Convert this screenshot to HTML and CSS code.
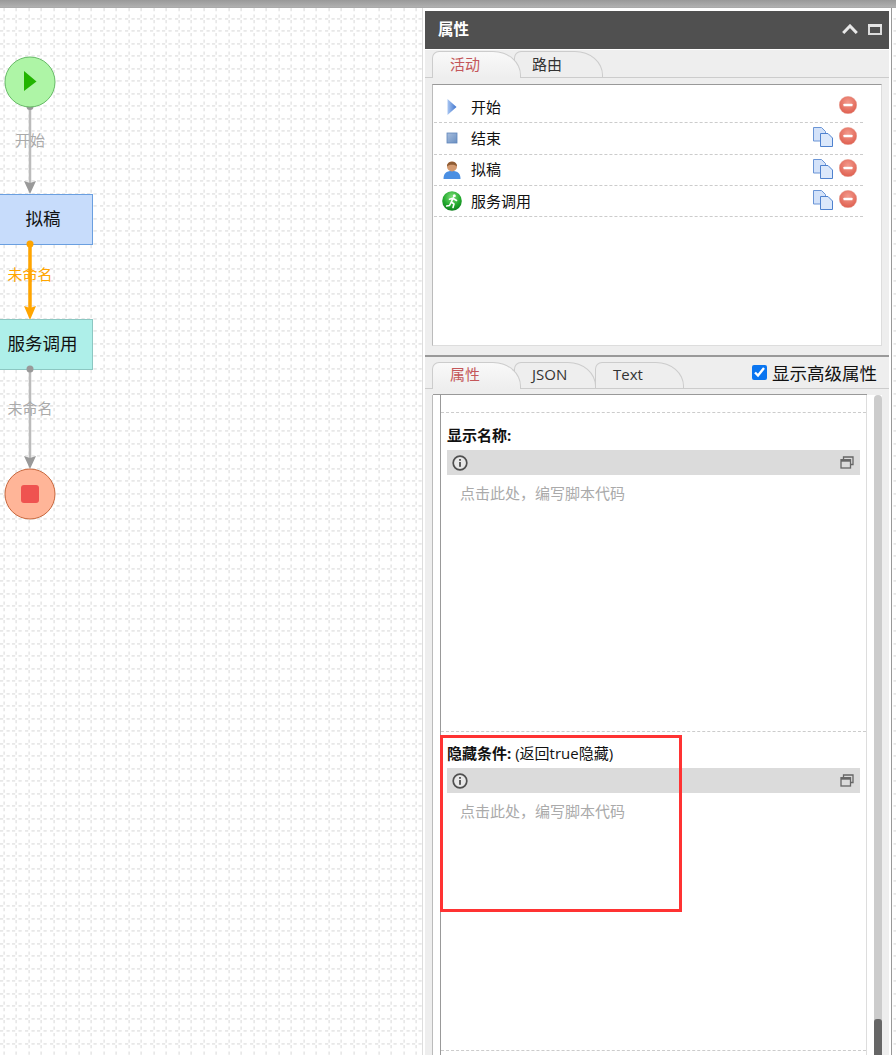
FILE: index.html
```html
<!DOCTYPE html>
<html lang="zh-CN">
<head>
<meta charset="utf-8">
<title>流程设计</title>
<link rel="stylesheet" href="styles.css">
</head>
<body>
<svg class="defs" width="0" height="0" aria-hidden="true">
  <defs>
    <linearGradient id="gPlay" x1="0" y1="0" x2="1" y2="0"><stop offset="0" stop-color="#a9c6f2"/><stop offset="1" stop-color="#3c72cc"/></linearGradient>
    <linearGradient id="gSquare" x1="0" y1="0" x2="1" y2="1"><stop offset="0" stop-color="#a8bedd"/><stop offset="1" stop-color="#6a90c2"/></linearGradient>
    <radialGradient id="gGreen" cx=".5" cy=".3" r=".75"><stop offset="0" stop-color="#7fe07a"/><stop offset=".6" stop-color="#21a82c"/><stop offset="1" stop-color="#0d7a1e"/></radialGradient>
    <radialGradient id="gRed" cx=".5" cy=".35" r=".7"><stop offset="0" stop-color="#f39a8c"/><stop offset="1" stop-color="#dd5a4a"/></radialGradient>
    <symbol id="iPlay" viewBox="0 0 18 18"><path d="M4.500 1 L13.500 9 L4.500 17 Z" fill="url(#gPlay)"/></symbol>
    <symbol id="iSquare" viewBox="0 0 18 18"><rect x="4" y="4" width="10" height="10" fill="url(#gSquare)" stroke="#5f86bb" stroke-width=".8"/></symbol>
    <symbol id="iUser" viewBox="0 0 18 18">
      <path d="M.5 18 C.5 12.500 3 10 9 10 C15 10 17.500 12.500 17.500 18 Z" fill="#4b8fe2"/>
      <circle cx="9" cy="5.500" r="5" fill="#d39a70"/>
      <path d="M4 5.500 C3.500 -1 14.500 -1 14 5.500 C12 3.300 6 3.300 4 5.500 Z" fill="#8f5c34"/>
    </symbol>
    <symbol id="iRun" viewBox="0 0 20 20">
      <circle cx="10" cy="10" r="9.800" fill="url(#gGreen)"/>
      <circle cx="12.300" cy="4.800" r="1.500" fill="#fff"/>
      <path d="M11.200 6.800 L9.300 11 L12 13 L11 16.500 M9.300 11 L7.500 14.500 L4.700 15 M10.800 7.300 L7.500 8.300 M11.300 7.500 L14.500 9.500" fill="none" stroke="#fff" stroke-width="1.600" stroke-linecap="round" stroke-linejoin="round"/>
    </symbol>
    <symbol id="iCopy" viewBox="0 0 20 20">
      <path d="M.5 .5 H8.500 L12.500 4.500 V14 H.5 Z" fill="#d3e2f9" stroke="#6a95d6"/>
      <path d="M7.500 6.500 H15 L19.500 11 V19.500 H7.500 Z" fill="#dbe8fb" stroke="#4f82cf"/>
    </symbol>
    <symbol id="iDel" viewBox="0 0 18 18">
      <circle cx="9" cy="9" r="8.800" fill="url(#gRed)" stroke="#e9b3a8" stroke-width=".4"/>
      <rect x="4.500" y="7.700" width="9" height="2.600" rx=".6" fill="#fff"/>
    </symbol>
    <symbol id="iInfo" viewBox="0 0 16 16">
      <circle cx="8" cy="8" r="6.800" fill="#e8e8e8" stroke="#4f4f4f" stroke-width="1.700"/>
      <rect x="7.100" y="7" width="1.800" height="4.800" fill="#4f4f4f"/>
      <rect x="7.100" y="4" width="1.800" height="1.800" fill="#4f4f4f"/>
    </symbol>
    <symbol id="iRestore" viewBox="0 0 14 14">
      <path d="M3.500 3.500 V1 H13 V8.500 H10.500" fill="none" stroke="#666" stroke-width="1.300"/>
      <rect x="1" y="3.700" width="9.500" height="8.300" fill="none" stroke="#666" stroke-width="1.300"/>
      <rect x="1" y="3.700" width="9.500" height="2" fill="#666"/>
    </symbol>
  </defs>
</svg>

<div class="topbar"></div>
<div class="main">
  <div class="canvas">
    <svg class="diagram" width="422" height="1048" viewBox="0 7 422 1048">
      <path class="edge" d="M30 106 V184"/>
      <path class="arrow" d="M24 181 L30 183 L36 181 L30 194 Z"/>
      <circle class="port" cx="30" cy="106.500" r="3.500"/>
      <path class="edge edge-active" d="M30 244 V310"/>
      <path class="arrow arrow-active" d="M24 306 L30 308 L36 306 L30 320 Z"/>
      <path class="edge" d="M30 369 V458"/>
      <path class="arrow" d="M24 456 L30 458 L36 456 L30 469 Z"/>

      <circle class="start" cx="30" cy="82" r="25"/>
      <path class="start-mark" d="M24 71 L36.500 81.500 L24 91 Z"/>

      <rect class="task" x="-10" y="194.500" width="102.500" height="50"/>
      <text class="node-text" x="43" y="225">拟稿</text>
      <circle class="port port-active" cx="30" cy="244" r="3.500"/>

      <rect class="service" x="-10" y="319.500" width="102.500" height="50"/>
      <text class="node-text" x="42.500" y="350">服务调用</text>
      <circle class="port" cx="30" cy="369" r="3.500"/>

      <circle class="end" cx="30" cy="494" r="25"/>
      <rect class="end-mark" x="21" y="485" width="18" height="18" rx="3"/>

      <text class="edge-text" x="30" y="146">开始</text>
      <text class="edge-text edge-text-active" x="30" y="280">未命名</text>
      <text class="edge-text" x="30" y="414">未命名</text>
    </svg>
  </div>

  <aside class="panel">
    <header class="panel-head">
      <span class="panel-title">属性</span>
      <span class="panel-tools">
        <svg width="16" height="10" viewBox="0 0 16 10"><path d="M1.200 9 L8 2 L14.800 9" fill="none" stroke="#e8e8e8" stroke-width="3"/></svg>
        <svg width="14" height="11" viewBox="0 0 14 11"><rect x="1" y="1.500" width="12" height="8.500" fill="none" stroke="#dcdcdc" stroke-width="2"/><rect x="0" y="0" width="14" height="3" fill="#e4e4e4"/></svg>
      </span>
    </header>

    <section class="section section-top">
      <div class="tabs">
        <span class="tab is-active">活动</span>
        <span class="tab">路由</span>
      </div>
      <div class="list-box">
        <ul class="list">
          <li class="row">
            <span class="row-icon"><svg width="18" height="18"><use href="#iPlay"/></svg></span>
            <span class="row-name">开始</span>
            <span class="row-actions"><svg class="del" width="18" height="18"><use href="#iDel"/></svg></span>
          </li>
          <li class="row">
            <span class="row-icon"><svg width="18" height="18"><use href="#iSquare"/></svg></span>
            <span class="row-name">结束</span>
            <span class="row-actions"><svg width="20" height="20"><use href="#iCopy"/></svg><svg class="del" width="18" height="18"><use href="#iDel"/></svg></span>
          </li>
          <li class="row">
            <span class="row-icon"><svg width="18" height="18"><use href="#iUser"/></svg></span>
            <span class="row-name">拟稿</span>
            <span class="row-actions"><svg width="20" height="20"><use href="#iCopy"/></svg><svg class="del" width="18" height="18"><use href="#iDel"/></svg></span>
          </li>
          <li class="row">
            <span class="row-icon"><svg width="20" height="20"><use href="#iRun"/></svg></span>
            <span class="row-name">服务调用</span>
            <span class="row-actions"><svg width="20" height="20"><use href="#iCopy"/></svg><svg class="del" width="18" height="18"><use href="#iDel"/></svg></span>
          </li>
        </ul>
      </div>
    </section>

    <section class="section section-bottom">
      <div class="tabs tabs-bottom">
        <span class="tab is-active">属性</span>
        <span class="tab tab-short">JSON</span>
        <span class="tab tab-text">Text</span>
        <label class="advanced"><input type="checkbox" checked>显示高级属性</label>
      </div>
      <div class="prop-box">
        <div class="prop-scroll">
          <div class="prop-spacer"></div>
          <div class="field field-first">
            <div class="field-label"><b>显示名称:</b></div>
            <div class="field-bar">
              <svg width="16" height="16"><use href="#iInfo"/></svg>
              <svg width="14" height="14"><use href="#iRestore"/></svg>
            </div>
            <div class="field-code">点击此处，编写脚本代码</div>
          </div>
          <div class="field">
            <div class="field-label"><b>隐藏条件:</b> (返回true隐藏)</div>
            <div class="field-bar">
              <svg width="16" height="16"><use href="#iInfo"/></svg>
              <svg width="14" height="14"><use href="#iRestore"/></svg>
            </div>
            <div class="field-code">点击此处，编写脚本代码</div>
            <div class="highlight"></div>
          </div>
        </div>
        <div class="scrollbar"><div class="scroll-thumb"></div></div>
      </div>
    </section>
  </aside>
</div>
</body>
</html>
```
FILE: styles.css
```css
* { box-sizing: border-box; }
html, body { margin: 0; height: 100%; overflow: hidden; }
body {
  display: flex;
  flex-direction: column;
  font-family: "Open Sans", "Noto Sans CJK SC", sans-serif;
  font-size: 15px;
  color: #111;
  background: #fff;
}
.defs { position: absolute; }

.topbar {
  flex: 0 0 8px;
  background: linear-gradient(#999, #b0b0b0);
  border-bottom: 1px solid #aaa;
}

.main {
  flex: 1;
  min-height: 0;
  display: flex;
  background-color: #fff;
  background-image: url("data:image/svg+xml,%3Csvg xmlns='http://www.w3.org/2000/svg' width='12.5' height='12.5'%3E%3Cpath d='M4 0V12.5M0 10.500H12.500' stroke='%23e8e8e8' stroke-width='1.600' stroke-dasharray='3.100 3.150' fill='none'/%3E%3C/svg%3E");
  background-size: 12.5px 12.5px;
}

.canvas { flex: 0 0 422px; overflow: hidden; }
.diagram { display: block; margin-top: -1px; }
.edge { fill: none; stroke: #bbb; stroke-width: 2.5; }
.edge-active { stroke: #ffa500; stroke-width: 3.5; }
.arrow { fill: #999; }
.arrow-active { fill: #ffa500; }
.port { fill: #999; }
.port-active { fill: #ffa500; }
.start { fill: #aef5a6; stroke: #66bb66; stroke-width: 1; }
.start-mark { fill: #22b400; }
.end { fill: #ffb598; stroke: #c8673c; stroke-width: 1; }
.end-mark { fill: #ef5350; }
.task { fill: #c7dcfb; stroke: #6a9fe0; stroke-width: 1; }
.service { fill: #aeefe9; stroke: #8cc7c2; stroke-width: 1; }
.node-text { font-size: 17.5px; text-anchor: middle; fill: #111; }
.edge-text { font-size: 15px; text-anchor: middle; fill: #aaa; }
.edge-text-active { fill: #ffa500; }

.panel {
  flex: 0 0 470px;
  display: flex;
  flex-direction: column;
  min-height: 0;
  padding: 3px 2px 0;
  background: #fff;
  border-left: 1px solid #ddd;
  border-right: 1px solid #999;
}
.panel-head {
  flex: 0 0 38px;
  display: flex;
  align-items: center;
  justify-content: space-between;
  padding: 0 7px 0 13px;
  background: #505050;
  color: #fff;
}
.panel-title { font-size: 15.5px; font-weight: 700; line-height: 20px; margin-top: -2px; }
.panel-tools { display: flex; align-items: center; gap: 10px; margin-top: -2px; }

.section { background: #eee; }
.section-top { flex: 0 0 305px; margin-top: 1px; }
.section-bottom {
  flex: 1;
  min-height: 0;
  display: flex;
  flex-direction: column;
  border-top: 2px solid #999;
}

.tabs {
  display: flex;
  align-items: flex-end;
  height: 28px;
  padding-left: 7px;
  border-bottom: 1px solid #ccc;
}
.tabs-bottom { height: 32px; }
.tabs-bottom .tab { line-height: 22px; }
.tab {
  position: relative;
  width: 89px;
  height: 26px;
  margin-right: -7px;
  padding-left: 17px;
  line-height: 24px;
  font-size: 15px;
  background: #eee;
  color: #333;
  border: 1px solid #ccc;
  border-bottom: 0;
  border-radius: 7px 28px 0 0 / 7px 24px 0 0;
}
.tab-short { width: 82px; margin-right: -1px; }
.tab-text { padding-left: 17px; }
.tab.is-active {
  z-index: 1;
  color: #c4575a;
  background: linear-gradient(#f9f9f9, #eee);
  margin-bottom: -1px;
  height: 27px;
}
.tab:last-of-type { margin-right: 0; }
.advanced {
  margin-left: auto;
  margin-right: 12px;
  align-self: center;
  display: flex;
  align-items: center;
  gap: 5px;
  font-size: 17.5px;
  line-height: 24px;
  color: #111;
}
.advanced input { width: 15px; height: 15px; margin: 0; accent-color: #0a75f0; }

.list-box {
  height: 262px;
  margin: 6px 7px 0;
  padding: 7px 18px 0 1px;
  background: #fff;
  border-top: 1px solid #999;
  border-left: 1px solid #bbb;
  border-right: 1px solid #ddd;
  border-bottom: 1px solid #ddd;
}
.list { list-style: none; margin: 0; padding: 0; }
.row {
  display: flex;
  align-items: center;
  height: 31.3px;
  padding-bottom: 2px;
  border-bottom: 1px dashed #ccc;
}
.row-icon {
  flex: 0 0 37px;
  display: flex;
  justify-content: center;
  padding-right: 2px;
  margin-top: 2px;
}
.row-icon svg { display: block; }
.row-name { font-size: 15px; }
.row-actions {
  margin-left: auto;
  margin-right: 6px;
  display: flex;
  align-items: center;
  gap: 6px;
}
.row-actions svg { display: block; }
.row-actions .del { margin-bottom: 2px; }

.prop-box {
  flex: 1;
  min-height: 0;
  display: flex;
  margin: 6px 7px 0;
  padding-left: 7px;
  background: #fff;
  border-left: 1px solid #bbb;
  position: relative;
}
.prop-box::before {
  content: "";
  position: absolute;
  top: -1px;
  left: 0;
  width: 434px;
  height: 1px;
  background: #999;
}
.prop-scroll {
  flex: 0 0 427px;
  border-left: 1px solid #999;
  border-right: 1px solid #ddd;
}
.prop-spacer { height: 18px; border-bottom: 1px dashed #ccc; }
.field {
  position: relative;
  height: 319px;
  padding: 11px 6px 0;
  border-bottom: 1px dashed #ccc;
}
.field-first { padding-top: 12px; }
.field-label { height: 20px; line-height: 20px; font-size: 15px; color: #111; }
.field-label b { font-weight: 700; }
.field-bar {
  display: flex;
  align-items: center;
  justify-content: space-between;
  height: 25px;
  margin-top: 5px;
  padding: 0 6px 0 5px;
  background: #dbdbdb;
}
.field-bar svg { display: block; }
.field-code {
  margin-top: 8px;
  padding-left: 13px;
  line-height: 20px;
  font-size: 15px;
  color: #aaa;
}
.highlight {
  position: absolute;
  left: -1px;
  top: 3px;
  width: 242px;
  height: 177px;
  border: 3px solid #ff3333;
}
.scrollbar {
  flex: 0 0 8px;
  margin-left: 7px;
  display: flex;
  flex-direction: column;
  justify-content: flex-end;
  background: #ccc;
  border-radius: 4px 4px 0 0;
}
.scroll-thumb { height: 36px; background: #666; border-radius: 3px 3px 0 0; }
```
